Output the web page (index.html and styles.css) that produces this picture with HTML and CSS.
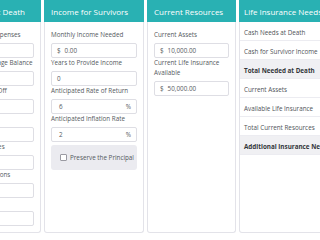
FILE: index.html
```html
<!DOCTYPE html>
<html lang="en">
<head>
<meta charset="utf-8">
<title>Life Insurance Calculator</title>
<link rel="stylesheet" href="styles.css">
</head>
<body>
<main class="deck">
  <section class="card card-death">
    <h2 class="card-head">Cash Needs at Death</h2>
    <div class="card-body">
      <div class="field"><label class="lbl">Medical &amp; Final Expenses</label><div class="box"><span class="val"></span></div></div>
      <div class="field"><label class="lbl">Remaining Mortgage Balance</label><div class="box"><span class="val"></span></div></div>
      <div class="field"><label class="lbl">Car Loans to Pay Off</label><div class="box"><span class="val"></span></div></div>
      <div class="field"><label class="lbl">Emergency Fund</label><div class="box"><span class="val"></span></div></div>
      <div class="field"><label class="lbl">Estate Taxes &amp; Fees</label><div class="box"><span class="val"></span></div></div>
      <div class="field"><label class="lbl">College Contributions</label><div class="box"><span class="val"></span></div></div>
      <div class="field"><label class="lbl">Other Needs</label><div class="box"><span class="val"></span></div></div>
    </div>
  </section>

  <section class="card card-surv">
    <h2 class="card-head">Income for Survivors</h2>
    <div class="card-body">
      <div class="field"><label class="lbl">Monthly Income Needed</label><div class="box"><span class="pre">$</span><span class="val">0.00</span></div></div>
      <div class="field"><label class="lbl">Years to Provide Income</label><div class="box"><span class="val">0</span></div></div>
      <div class="field"><label class="lbl">Anticipated Rate of Return</label><div class="box"><span class="val val-pct">6</span><span class="suf">%</span></div></div>
      <div class="field"><label class="lbl">Anticipated Inflation Rate</label><div class="box"><span class="val val-pct">2</span><span class="suf">%</span></div></div>
      <div class="check-panel"><span class="check"></span><span class="check-text">Preserve the Principal</span></div>
    </div>
  </section>

  <section class="card card-res">
    <h2 class="card-head">Current Resources</h2>
    <div class="card-body">
      <div class="field"><label class="lbl">Current Assets</label><div class="box"><span class="pre">$</span><span class="val">10,000.00</span></div></div>
      <div class="field"><label class="lbl">Current Life Insurance Available</label><div class="box"><span class="pre">$</span><span class="val">50,000.00</span></div></div>
    </div>
  </section>

  <section class="card card-needs">
    <h2 class="card-head head-needs">Life Insurance Needs</h2>
    <ul class="rows">
      <li class="row">Cash Needs at Death</li>
      <li class="row">Cash for Survivor Income</li>
      <li class="row row-total">Total Needed at Death</li>
      <li class="row">Current Assets</li>
      <li class="row">Available Life Insurance</li>
      <li class="row">Total Current Resources</li>
      <li class="row row-total">Additional Insurance Needs</li>
    </ul>
  </section>
</main>
</body>
</html>
```

FILE: styles.css
```css
html, body {
  margin: 0;
  padding: 0;
  background: #ffffff;
  overflow: hidden;
}

body {
  font-family: "Open Sans", "Noto Sans", sans-serif;
  color: #555a60;
}

.deck {
  display: flex;
  gap: 3px;
  height: 233px;
  margin-left: -60px;
  width: max-content;
}

.card {
  flex: 0 0 auto;
  box-sizing: border-box;
  border: 1px solid #e3e3e9;
  border-top: 0;
  border-radius: 0 0 3px 3px;
  background: #ffffff;
  display: flex;
  flex-direction: column;
}

.card-death { width: 101px; }
.card-surv { width: 100px; }
.card-res { width: 89px; }
.card-needs { width: 124px; }

.card-head {
  margin: 0 -1px;
  height: 22px;
  line-height: 23px;
  padding: 0 7px;
  background: #29b1b3;
  color: #ffffff;
  font-size: 8px;
  font-weight: 400;
  white-space: nowrap;
  overflow: hidden;
}

.head-needs {
  padding: 0 5px;
}

.card-body {
  padding: 8px 6px 6px;
  display: flex;
  flex-direction: column;
}

.field {
  display: flex;
  flex-direction: column;
}

.lbl {
  display: block;
  font-size: 6.3px;
  line-height: 10px;
  margin-bottom: 3px;
  color: #555a60;
  white-space: normal;
}

.card-death .lbl {
  white-space: nowrap;
}

.box {
  box-sizing: border-box;
  height: 15px;
  border: 1px solid #dedee4;
  border-radius: 2px;
  display: flex;
  align-items: center;
  padding: 0 5px;
  font-size: 6.3px;
  color: #555a60;
  background: #ffffff;
}

.pre {
  margin-right: 4px;
}

.val {
  flex: 1 1 auto;
}

.val-pct {
  padding-left: 2px;
}

.suf {
  flex: 0 0 auto;
}

.check-panel {
  margin-top: 3px;
  height: 25px;
  box-sizing: border-box;
  background: #ebebf0;
  border-radius: 3px;
  display: flex;
  align-items: center;
  padding-left: 9px;
  gap: 3px;
  font-size: 6.3px;
  color: #555a60;
}

.check {
  flex: 0 0 auto;
  width: 5px;
  height: 5px;
  border: 1px solid #9a9aa2;
  border-radius: 1px;
  background: #ffffff;
}

.rows {
  list-style: none;
  margin: 0;
  padding: 0;
}

.row {
  box-sizing: border-box;
  height: 19px;
  line-height: 17px;
  padding: 2px 4px 0;
  border-bottom: 1px solid #ececf1;
  font-size: 6.3px;
  color: #4f5358;
  white-space: nowrap;
  overflow: hidden;
}

.row-total {
  background: #f0f0f3;
  font-weight: 700;
  color: #33363a;
}
```
